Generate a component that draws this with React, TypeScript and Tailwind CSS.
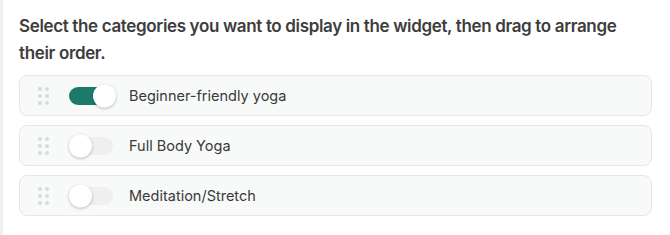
import React, { useState } from 'react';

type Category = { id: string; label: string; enabled: boolean };

const initial: Category[] = [
  { id: 'beginner', label: 'Beginner-friendly yoga', enabled: true },
  { id: 'full-body', label: 'Full Body Yoga', enabled: false },
  { id: 'meditation', label: 'Meditation/Stretch', enabled: false },
];

const DragHandle: React.FC = () => (
  <div className="grid grid-cols-2 gap-[3px]">
    {Array.from({ length: 6 }).map((_, i) => (
      <span key={i} className="h-[4px] w-[4px] rounded-full bg-[#d9dcdc]" />
    ))}
  </div>
);

const Toggle: React.FC<{ on: boolean; onChange: () => void }> = ({ on, onChange }) => (
  <button
    type="button"
    onClick={onChange}
    className={`relative h-[18px] w-[44px] rounded-full ${on ? 'bg-[#1d7a6b]' : 'bg-[#efefef]'}`}
  >
    <span
      className={`absolute top-1/2 h-[23px] w-[23px] -translate-y-1/2 rounded-full bg-white shadow-[0_1px_3px_rgba(0,0,0,0.25)] ${
        on ? 'left-[24px]' : 'left-0'
      }`}
    />
  </button>
);

export default function App() {
  const [items, setItems] = useState(initial);

  const toggle = (id: string) =>
    setItems((prev) => prev.map((c) => (c.id === id ? { ...c, enabled: !c.enabled } : c)));

  return (
    <div className="h-[235px] w-[670px] border-l-[3px] border-[#eef1f4] bg-white font-['Inter',sans-serif]">
      <div className="pl-[16px] pr-[18px] pt-[13px]">
        <p className="text-[17px] font-semibold leading-[27px] tracking-[-0.35px] text-[#3d3d3d]">
          Select the categories you want to display in the widget, then drag to arrange their order.
        </p>
        <div className="mt-[8px] flex flex-col gap-[9px]">
          {items.map((c) => (
            <div
              key={c.id}
              className="flex h-[41px] items-center rounded-lg border border-[#e6e8e8] bg-[#f8f9f9] pl-[18px]"
            >
              <DragHandle />
              <div className="ml-[20px] flex items-center">
                <Toggle on={c.enabled} onChange={() => toggle(c.id)} />
              </div>
              <span className="ml-[16px] text-[14.5px] text-[#3a3a3a]">{c.label}</span>
            </div>
          ))}
        </div>
      </div>
    </div>
  );
}
